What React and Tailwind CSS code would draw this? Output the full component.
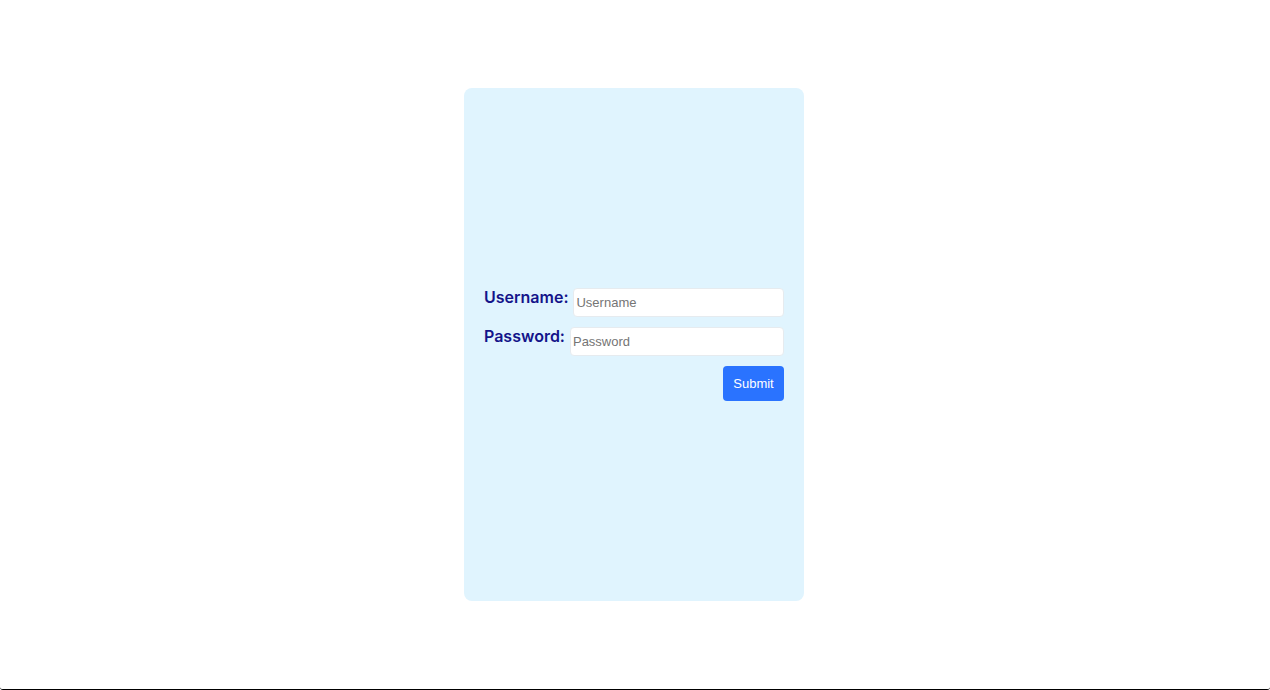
export default function App() {
  return (
    <div className="h-[690px] w-full bg-white border-b border-black rounded-b-[3px] flex items-center justify-center pr-[2px]">
      <div className="w-[340px] h-[513px] bg-[#e0f4fe] rounded-[8px] px-5 flex flex-col justify-center">
        <form className="flex flex-col gap-[10px]" onSubmit={(e) => e.preventDefault()}>
          <div className="flex items-start gap-[5px]">
            <label className="font-['Inter',sans-serif] font-semibold text-[16px] leading-[19px] text-[#14148a]">
              Username:
            </label>
            <input
              type="text"
              placeholder="Username"
              className="flex-1 min-w-0 h-[29px] bg-white border border-[#e6ebef] rounded-[4px] px-[2px] text-[13px] font-['Liberation_Sans',Arial,sans-serif] placeholder:text-[#757575] outline-none"
            />
          </div>
          <div className="flex items-start gap-[5px]">
            <label className="font-['Inter',sans-serif] font-semibold text-[16px] leading-[19px] text-[#14148a]">
              Password:
            </label>
            <input
              type="password"
              placeholder="Password"
              className="flex-1 min-w-0 h-[29px] bg-white border border-[#e6ebef] rounded-[4px] px-[2px] text-[13px] font-['Liberation_Sans',Arial,sans-serif] placeholder:text-[#757575] outline-none"
            />
          </div>
          <div className="flex justify-end">
            <button
              type="submit"
              className="h-[35px] w-[61px] bg-[#2a73ff] text-white rounded-[4px] text-[13px] font-['Liberation_Sans',Arial,sans-serif]"
            >
              Submit
            </button>
          </div>
        </form>
      </div>
    </div>
  );
}
